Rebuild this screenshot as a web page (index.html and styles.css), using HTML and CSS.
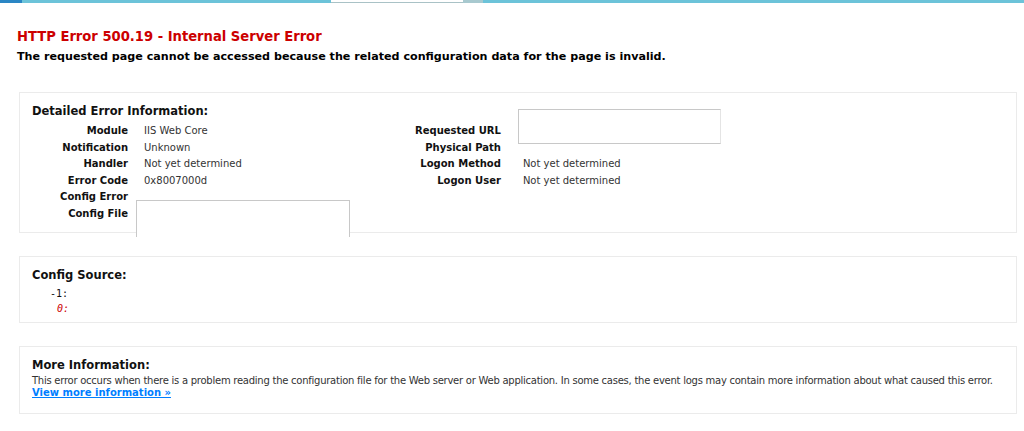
FILE: index.html
```html
<!DOCTYPE html>
<html lang="en">
  <head>
    <meta charset="UTF-8" />
    <title>IIS 8.5 Detailed Error - 500.19 - Internal Server Error</title>
    <link rel="stylesheet" href="styles.css">
  </head>
  <body>
    <!--barre du haut-->
    <div class="topbar">
      <span class="tb-start"></span>
      <span class="tb-blue tb-left"></span>
      <span class="tb-tab"></span>
      <span class="tb-grey"></span>
      <span class="tb-blue tb-right"></span>
    </div>

    <div id="content">
      <h2>HTTP Error 500.19 - Internal Server Error</h2>
      <h3>The requested page cannot be accessed because the related configuration data for the page is invalid.</h3>

      <fieldset class="box details">
        <legend>Detailed Error Information:</legend>
        <div class="columns">
          <table class="details-left">
            <tr><th>Module</th><td>IIS Web Core</td></tr>
            <tr><th>Notification</th><td>Unknown</td></tr>
            <tr><th>Handler</th><td>Not yet determined</td></tr>
            <tr><th>Error Code</th><td>0x8007000d</td></tr>
            <tr><th>Config Error</th><td></td></tr>
            <tr><th>Config File</th><td><div class="blank config-file"></div></td></tr>
          </table>
          <table class="details-right">
            <tr><th>Requested URL</th><td><div class="blank req-url"></div></td></tr>
            <tr><th>Physical Path</th><td></td></tr>
            <tr><th>Logon Method</th><td>Not yet determined</td></tr>
            <tr><th>Logon User</th><td>Not yet determined</td></tr>
          </table>
        </div>
      </fieldset>

      <fieldset class="box config_source">
        <legend>Config Source:</legend>
        <div class="code-line">-1:</div>
        <div class="code-line highlight-code">0:</div>
      </fieldset>

      <fieldset class="box more">
        <legend>More Information:</legend>
        <p>This error occurs when there is a problem reading the configuration file for the Web server or Web application. In some cases, the event logs may contain more information about what caused this error.</p>
        <p><a href="#">View more information &raquo;</a></p>
      </fieldset>
    </div>
  </body>
</html>
```

FILE: styles.css
```css
body {
  margin: 0;
  font-family: "DejaVu Sans", Verdana, sans-serif;
  font-size: 10px;
  color: #222;
  background-color: #fff;
}
.topbar {
  display: flex;
  height: 3px;
}
.tb-start {
  width: 22px;
  background-color: #2a86c4;
}
.tb-blue {
  background-color: #6cc3d9;
}
.tb-left {
  width: 309px;
}
.tb-tab {
  width: 132px;
  background-color: #fff;
  border-bottom: 1px solid #a9c2c6;
  box-sizing: border-box;
}
.tb-grey {
  width: 20px;
  background-color: #a8c9cf;
}
.tb-right {
  flex: 1;
}
#content {
  padding: 0 7px 0 19px;
}
h2 {
  margin: 24px 0 0 -2px;
  font-family: "DejaVu Sans Condensed", "DejaVu Sans", sans-serif;
  font-size: 14.6px;
  color: #cc0000;
}
h3 {
  margin: 6px 0 0 -2px;
  font-size: 11.15px;
  color: #000;
}
.box {
  margin: 0;
  border: 1px solid #ebebeb;
  padding: 0 12px 0 12px;
}
legend {
  font-weight: bold;
  font-size: 11.5px;
  color: #111;
  float: left;
  width: 100%;
  padding: 0;
}
.details {
  margin-top: 29px;
  height: 141px;
  box-sizing: border-box;
}
.details legend {
  margin-top: 11px;
}
.columns {
  clear: both;
  display: flex;
  align-items: flex-start;
  padding-top: 7px;
}
table {
  border-collapse: collapse;
  border: none;
}
th,
td {
  padding: 0;
  height: 16.6px;
  vertical-align: top;
  line-height: 12px;
  white-space: nowrap;
}
th {
  text-align: right;
  font-weight: bold;
  padding-right: 16px;
  color: #111;
}
td {
  text-align: left;
  color: #333;
}
.details-left {
  width: 383px;
}
.details-left th {
  width: 96px;
}
.details-right th {
  width: 79px;
  padding-right: 22px;
}
.blank {
  background: #fff;
  border: 1px solid #c8c8c8;
}
.config-file {
  margin: -8px 0 -40px -8px;
  width: 212px;
  height: 36px;
  border-bottom: none;
}
.req-url {
  margin: -16px 0 -18px -5px;
  width: 201px;
  height: 33px;
  border-right-color: #e4e4e4;
}
.config_source {
  margin-top: 23px;
  height: 67px;
  box-sizing: border-box;
}
.config_source legend,
.more legend {
  margin-top: 11px;
}
.code-line {
  clear: both;
  padding-left: 18px;
  font-family: "DejaVu Sans Mono", "Liberation Mono", monospace;
  font-size: 10px;
  line-height: 15px;
  color: #111;
}
.config_source legend + .code-line {
  padding-top: 4px;
}
.highlight-code {
  color: #cc0000;
  font-style: italic;
  padding-left: 25px;
}
.more {
  margin-top: 23px;
  height: 68px;
  box-sizing: border-box;
}
.more p {
  clear: both;
  margin: 0;
  padding-top: 3px;
  line-height: 12px;
  color: #333;
  letter-spacing: -0.25px;
  white-space: nowrap;
}
.more p + p {
  padding-top: 0;
  letter-spacing: 0;
}
a:link,
a:visited {
  color: #007eff;
  font-weight: bold;
}
```
